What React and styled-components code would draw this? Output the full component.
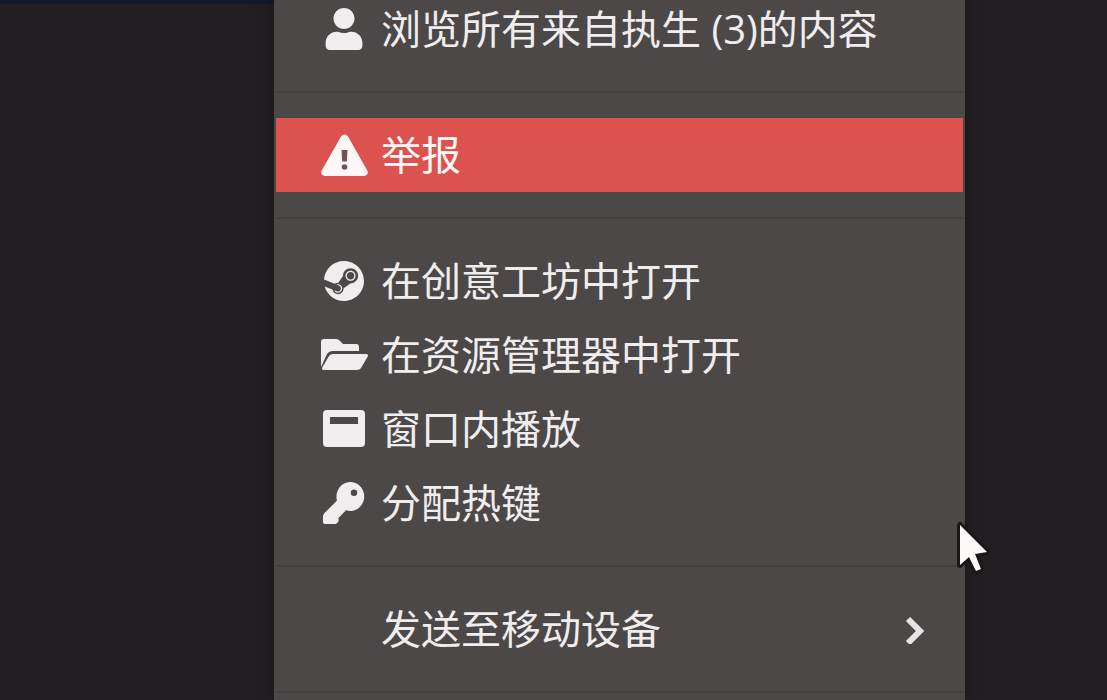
import styled, { createGlobalStyle } from "styled-components";
import { FaSteam, FaUser } from "react-icons/fa";

const GlobalStyle = createGlobalStyle`
  * {
    box-sizing: border-box;
  }
  body {
    margin: 0;
    background-color: #221f22;
    font-family: "Open Sans", "Noto Sans CJK SC", sans-serif;
  }
`;

const Page = styled.main`
  display: grid;
  grid-template-columns: 274fr 691fr 142fr;
  height: 100vh;
  overflow: hidden;
`;

const Backdrop = styled.div`
  border-top: 4px solid #14182b;
`;

/* the list is scrolled a little, so the first row is cut at the top */
const Menu = styled.nav`
  position: relative;
  margin-top: -33px;
  padding: 0 2px;
  background-color: #4c4847;
  box-shadow: 0 0 16px rgba(20, 16, 16, 0.6);
`;

const Group = styled.ul`
  margin: 0;
  padding: 25px 0;
  list-style: none;
  border-bottom: 2px solid #434041;
`;

const Item = styled.button`
  display: flex;
  align-items: center;
  gap: 13px;
  width: 100%;
  height: 74px;
  padding: 0 38px 0 44px;
  border: 0;
  background-color: ${(props) => (props.$danger ? "#db524f" : "transparent")};
  color: ${(props) => (props.$danger ? "#fdf7f7" : "#efedee")};
  font-family: inherit;
  font-size: 40px;
  line-height: 48px;
  text-align: left;
  white-space: nowrap;
`;

const IconBox = styled.span`
  display: flex;
  flex: none;
  justify-content: center;
  width: 48px;
  svg {
    flex: none;
    height: 42px;
  }
`;

const Label = styled.span`
  flex: 1;
`;

const Arrow = styled.svg`
  flex: none;
  width: 20px;
  height: 30px;
`;

const Pointer = styled.svg`
  position: absolute;
  top: 553px;
  right: -26px;
  width: 36px;
  height: 54px;
`;

const WarningIcon = () => (
  <svg viewBox="0 0 47 42" aria-hidden="true">
    <path
      d="M20 2.5Q23.5 -1.5 27 2.5L46 36Q48.500 41 43 42H4Q-1.500 41 1 36Z"
      fill="currentColor"
    />
    <path d="M20.500 16H26.500L25.800 27.500H21.200Z" fill="#6f5355" />
    <circle cx="23.500" cy="33" r="2.800" fill="#6f5355" />
  </svg>
);

const FolderIcon = () => (
  <svg viewBox="0 0 47 42" aria-hidden="true">
    <path
      d="M0 33V8Q0 5 3 5H15Q17 5 18 6L22 10H35Q38 10 38 13V17H12Q8 17 6 20Z"
      fill="currentColor"
    />
    <path
      d="M12 20H45Q48 20 46.500 23L40 34Q39 36 36 36H3Q0 36 1.500 33L8 22Q9.500 20 12 20Z"
      fill="currentColor"
    />
  </svg>
);

const WindowIcon = () => (
  <svg viewBox="0 0 42 42" aria-hidden="true">
    <path
      fillRule="evenodd"
      d="M4 2H38Q42 2 42 6V35Q42 39 38 39H4Q0 39 0 35V6Q0 2 4 2ZM7 9V16H35V9Z"
      fill="currentColor"
    />
  </svg>
);

const KeyIcon = () => (
  <svg viewBox="0 0 42 42" aria-hidden="true">
    <path
      fillRule="evenodd"
      d="M28 0A14 14.500 0 1 1 23 28.300L15.500 36V39.500L13 42H1.500Q0 42 0 40V34.500Q0 32.500 1.500 31L14 18.500A14 14.500 0 0 1 28 0ZM31 7.500A3.200 3.200 0 1 0 31 13.900A3.200 3.200 0 1 0 31 7.500Z"
      fill="currentColor"
    />
  </svg>
);

const groups = [
  [{ label: "浏览所有来自执生 (3)的内容", icon: FaUser }],
  [{ label: "举报", icon: WarningIcon, danger: true }],
  [
    { label: "在创意工坊中打开", icon: FaSteam },
    { label: "在资源管理器中打开", icon: FolderIcon },
    { label: "窗口内播放", icon: WindowIcon },
    { label: "分配热键", icon: KeyIcon },
  ],
  [{ label: "发送至移动设备", submenu: true }],
];

const MenuItem = ({ label, icon: Icon, danger, submenu }) => (
  <li>
    <Item type="button" $danger={danger} aria-haspopup={submenu}>
      <IconBox>{Icon && <Icon />}</IconBox>
      <Label>{label}</Label>
      {submenu && (
        <Arrow viewBox="0 0 20 30" aria-hidden="true">
          <path d="M3 5L15 17L3 29" fill="none" stroke="#e6e4e5" strokeWidth="6" />
        </Arrow>
      )}
    </Item>
  </li>
);

export default function App() {
  return (
    <>
      <GlobalStyle />
      <Page>
        <Backdrop />
        <Menu>
          {groups.map((items) => (
            <Group key={items[0].label}>
              {items.map((item) => (
                <MenuItem key={item.label} {...item} />
              ))}
            </Group>
          ))}
          <Pointer viewBox="0 0 36 54" aria-hidden="true">
            <path
              d="M5 5V45L14 37L21 51L26 49L20 34L32 32Z"
              fill="#fdfafa"
              stroke="#1b1718"
              strokeWidth="6"
              strokeLinejoin="round"
              paintOrder="stroke"
            />
          </Pointer>
        </Menu>
      </Page>
    </>
  );
}
